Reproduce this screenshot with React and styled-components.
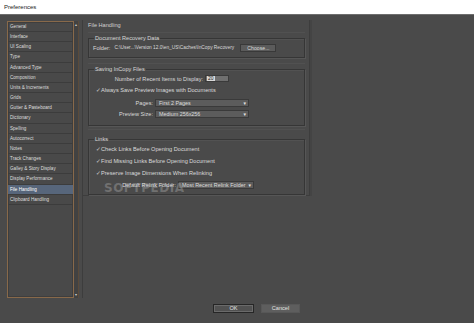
/*--Import Packages--*/
import React from 'react'
import styled, {createGlobalStyle} from 'styled-components'

const categories = [
    'General', 'Interface', 'UI Scaling', 'Type', 'Advanced Type', 'Composition',
    'Units & Increments', 'Grids', 'Gutter & Pasteboard', 'Dictionary', 'Spelling',
    'Autocorrect', 'Notes', 'Track Changes', 'Galley & Story Display',
    'Display Performance', 'File Handling', 'Clipboard Handling',
]

const App = () => {
    return (
        <Window>
            <GlobalStyle />
            <TitleBar>Preferences</TitleBar>
            <Content>
                <SidebarFrame>
                    <CategoryList>
                        {
                            categories.map(item => (
                                <CategoryItem key={item} $active={item === 'File Handling'}>{item}</CategoryItem>
                            ))
                        }
                    </CategoryList>
                    <Scrollbar>
                        <ScrollArrow>▴</ScrollArrow>
                        <ScrollArrow>▾</ScrollArrow>
                    </Scrollbar>
                </SidebarFrame>
                <MainPane>
                    <ScrollArea>
                        <Heading>File Handling</Heading>

                        <Section $top={3} $pad={1}>
                            <Group $pb={6}>
                                <Legend>Document Recovery Data</Legend>
                                <FolderRow>
                                    <span>Folder:</span>
                                    <Path>C:\User...\Version 12.0\en_US\Caches\InCopy Recovery</Path>
                                    <SmallButton>Choose...</SmallButton>
                                </FolderRow>
                            </Group>
                        </Section>

                        <Section $top={5} $pad={1}>
                            <Group $pb={7}>
                                <Legend>Saving InCopy Files</Legend>
                                <FieldRow $mt={1}>
                                    <Label $w={114}>Number of Recent Items to Display:</Label>
                                    <NumberInput><Selected>20</Selected></NumberInput>
                                </FieldRow>
                                <CheckRow $mt={2}><Check>✓</Check>Always Save Preview Images with Documents</CheckRow>
                                <FieldRow $mt={4} $h={10}>
                                    <Label $w={64}>Pages:</Label>
                                    <Select $w={94}>First 2 Pages<Arrow>▾</Arrow></Select>
                                </FieldRow>
                                <FieldRow $mt={1} $h={10}>
                                    <Label $w={64}>Preview Size:</Label>
                                    <Select $w={94}>Medium 256x256<Arrow>▾</Arrow></Select>
                                </FieldRow>
                            </Group>
                        </Section>

                        <Section $top={3} $pad={5}>
                            <Group $pb={5}>
                                <Legend>Links</Legend>
                                <CheckRow $mt={1}><Check>✓</Check>Check Links Before Opening Document</CheckRow>
                                <CheckRow $mt={3}><Check>✓</Check>Find Missing Links Before Opening Document</CheckRow>
                                <CheckRow $mt={3}><Check>✓</Check>Preserve Image Dimensions When Relinking</CheckRow>
                                <FieldRow $mt={3} $h={10}>
                                    <Label $w={87}>Default Relink Folder:</Label>
                                    <Select $w={76}>Most Recent Relink Folder<Arrow>▾</Arrow></Select>
                                </FieldRow>
                            </Group>
                        </Section>
                    </ScrollArea>
                </MainPane>
            </Content>
            <Footer>
                <DialogButton $default>OK</DialogButton>
                <DialogButton>Cancel</DialogButton>
            </Footer>
            <Watermark>SOFTPEDIA</Watermark>
        </Window>
    )
}

export default App

const GlobalStyle = createGlobalStyle`
    html, body {
        margin: 0;
        padding: 0;
        background: #4a4a4a;
    }
    * {
        box-sizing: border-box;
    }
`

const Window = styled.div`
    position: relative;
    width: 474px;
    height: 323px;
    overflow: hidden;
    background: #4a4a4a;
    display: flex;
    flex-direction: column;
    font-family: "Liberation Sans", Arial, sans-serif;
    color: #dadada;
`
    const TitleBar = styled.div`
        height: 15px;
        flex-shrink: 0;
        background: #ffffff;
        border-bottom: 1px solid #6e6e6e;
        color: #1a1a1a;
        font-size: 6px;
        line-height: 14px;
        padding-left: 4px;
    `

    const Content = styled.div`
        display: grid;
        grid-template-columns: 72px 228px;
        column-gap: 3px;
        padding: 6px 0 0 7px;
        height: 283px;
        flex-shrink: 0;
    `

        const SidebarFrame = styled.div`
            display: flex;
            height: 277px;
        `
            const CategoryList = styled.div`
                flex: 1;
                border: 1px solid #88694a;
                background: #494949;
                box-shadow: inset 0 0 0 1px #3e3e3e;
            `
                const CategoryItem = styled.div`
                    height: 10.17px;
                    border-bottom: 1px solid #3c3c3c;
                    padding-left: 2px;
                    font-size: 4.6px;
                    line-height: 9.5px;
                    white-space: nowrap;
                    color: ${p => p.$active ? '#ffffff' : '#dedede'};
                    background: ${p => p.$active ? '#57667b' : 'transparent'};
                `

            const Scrollbar = styled.div`
                width: 5px;
                background: #424242;
                border-right: 1px solid #5a4a3a;
                display: flex;
                flex-direction: column;
                justify-content: space-between;
                align-items: center;
                padding: 1px 0;
            `
                const ScrollArrow = styled.span`
                    font-family: "DejaVu Sans", sans-serif;
                    font-size: 4px;
                    line-height: 5px;
                    color: #cfcfcf;
                `

        const MainPane = styled.div`
            margin-top: -1px;
            height: 278px;
            border-left: 1px solid #3d3d3d;
        `
            const ScrollArea = styled.div`
                width: 227px;
                padding: 1px 4px 0 5px;
                border-right: 1px solid #3d3d3d;
                border-bottom: 1px solid #3d3d3d;
                box-shadow: 2px 0 0 #444;
            `
                const Heading = styled.div`
                    height: 8px;
                    font-size: 5.6px;
                    line-height: 8px;
                    color: #d2d2d2;
                `

                const Section = styled.div`
                    margin-top: ${p => p.$top}px;
                    padding-top: ${p => p.$pad}px;
                    border-top: 1px solid #515151;
                `
                    const Group = styled.fieldset`
                        margin: 0;
                        padding: 0 0 ${p => p.$pb - 1}px 0;
                        min-width: 0;
                        border: 1px solid #363636;
                        box-shadow: 1px 1px 0 #565656, inset 1px 1px 0 #525252;
                        font-size: 5.6px;
                    `
                        const Legend = styled.legend`
                            margin-left: 5px;
                            padding: 0 1px;
                            height: 8px;
                            font-size: 5.6px;
                            line-height: 8px;
                            color: #d6d6d6;
                        `

                        const FolderRow = styled.div`
                            display: flex;
                            align-items: center;
                            height: 9px;
                            margin-top: 1px;
                            padding-left: 4px;
                            white-space: nowrap;
                        `
                            const Path = styled.span`
                                margin-left: 4px;
                                font-size: 4.8px;
                                width: 126px;
                                overflow: hidden;
                            `
                            const SmallButton = styled.div`
                                width: 36px;
                                height: 8px;
                                background: #5b5b5b;
                                border: 1px solid #393939;
                                font-size: 5.2px;
                                line-height: 6px;
                                text-align: center;
                                color: #dcdcdc;
                            `

                        const FieldRow = styled.div`
                            display: flex;
                            align-items: center;
                            height: ${p => p.$h || 9}px;
                            margin-top: ${p => p.$mt}px;
                            gap: 2px;
                            white-space: nowrap;
                        `
                            const Label = styled.span`
                                width: ${p => p.$w}px;
                                text-align: right;
                            `
                            const NumberInput = styled.div`
                                width: 24px;
                                height: 7px;
                                background: #6f6f6f;
                                border: 1px solid #3a3a3a;
                                display: flex;
                                align-items: center;
                                padding-left: 1px;
                            `
                                const Selected = styled.span`
                                    background: #d9d9d9;
                                    color: #202020;
                                    font-size: 5px;
                                    line-height: 5px;
                                    padding: 0 1px;
                                `
                            const Select = styled.div`
                                position: relative;
                                width: ${p => p.$w}px;
                                height: 8px;
                                background: #5c5c5c;
                                border: 1px solid #3a3a3a;
                                padding-left: 3px;
                                font-size: 5.4px;
                                line-height: 6px;
                                color: #dcdcdc;
                            `
                                const Arrow = styled.span`
                                    position: absolute;
                                    right: 2px;
                                    top: 0;
                                    font-family: "DejaVu Sans", sans-serif;
                                    font-size: 5px;
                                    line-height: 6px;
                                    color: #e6e6e6;
                                `

                        const CheckRow = styled.div`
                            display: flex;
                            align-items: center;
                            height: 9px;
                            margin-top: ${p => p.$mt}px;
                            padding-left: 7px;
                            white-space: nowrap;
                        `
                            const Check = styled.span`
                                width: 5px;
                                font-family: "DejaVu Sans", sans-serif;
                                font-size: 5.6px;
                                color: #e4e4e4;
                            `

    const Footer = styled.div`
        display: flex;
        gap: 7px;
        padding: 6px 0 0 213px;
    `
        const DialogButton = styled.div`
            width: ${p => p.$default ? 41 : 39}px;
            height: 9px;
            background: ${p => p.$default ? '#515151' : '#5e5e5e'};
            border: 1px solid ${p => p.$default ? '#262626' : '#575757'};
            box-shadow: ${p => p.$default ? 'inset 0 0 0 1px #6a6a6a' : 'none'};
            font-size: 5.6px;
            line-height: 7px;
            text-align: center;
            color: #e2e2e2;
        `

    const Watermark = styled.div`
        position: absolute;
        left: 104px;
        top: 181px;
        font-family: "DejaVu Sans", sans-serif;
        font-weight: bold;
        font-size: 12px;
        letter-spacing: 0.5px;
        color: rgba(255, 255, 255, 0.22);
        pointer-events: none;
    `
